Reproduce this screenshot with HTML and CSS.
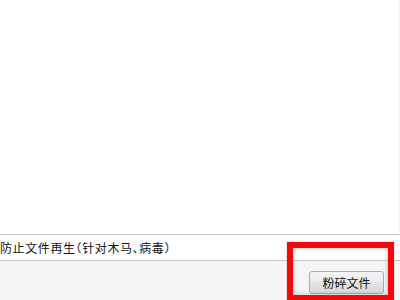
FILE: index.html
```html
<!DOCTYPE html>
<html lang="zh-CN">
<head>
    <meta charset="UTF-8">
    <meta name="viewport" content="width=device-width, initial-scale=1.0">
    <title>文件粉碎</title>
    <link rel="stylesheet" href="styles.css">
</head>
<body>
    <div class="window">
        <div class="file-list"></div>

        <div class="option-row">
            <span class="option-text">防止文件再生（针对木马、病毒）</span>
        </div>

        <div class="footer">
            <button class="button">粉碎文件</button>
        </div>

        <!-- annotation frame over the button -->
        <div class="mark"></div>
    </div>
</body>
</html>
```

FILE: styles.css
```css
html, body {
    margin: 0;
    padding: 0;
    background: white;
}
body {
    font-family: "Noto Sans CJK SC", "Liberation Sans", sans-serif;
    font-size: 12px;
    color: #111;
}
.window {
    position: relative;
    width: 400px;
    height: 300px;
    overflow: hidden;
    display: flex;
    flex-direction: column;
}
.file-list {
    height: 234px;
    background: white;
    border-right: 1px solid #f2f2f2;
    box-sizing: border-box;
}
.option-row {
    height: 25px;
    border-top: 1px solid #c6c6c6;
    border-bottom: 1px solid #c6c6c6;
    display: flex;
    align-items: center;
    background: white;
}
.option-text {
    font-feature-settings: "halt";
    letter-spacing: 0.6px;
    line-height: 12px;
    margin-top: 1px;
}
.footer {
    flex: 1;
    background: #f5f5f5;
    display: flex;
    justify-content: flex-end;
    align-items: flex-start;
    padding: 10px 16px 0 0;
}
.button {
    width: 75px;
    height: 23px;
    padding: 0;
    border: 1px solid #acacac;
    border-radius: 3px;
    background: linear-gradient(#f4f4f4, #ececec 50%, #e2e2e2 50%, #dadada);
    font-family: inherit;
    font-size: 12px;
    color: #111;
    line-height: 21px;
    cursor: pointer;
}
.mark {
    position: absolute;
    left: 287px;
    top: 242px;
    width: 95px;
    height: 47px;
    border: 6px solid #f00a0a;
    box-shadow: inset 0 0 5px rgba(0, 0, 0, 0.25), 0 0 1px rgba(200, 0, 0, 0.6);
}
```
